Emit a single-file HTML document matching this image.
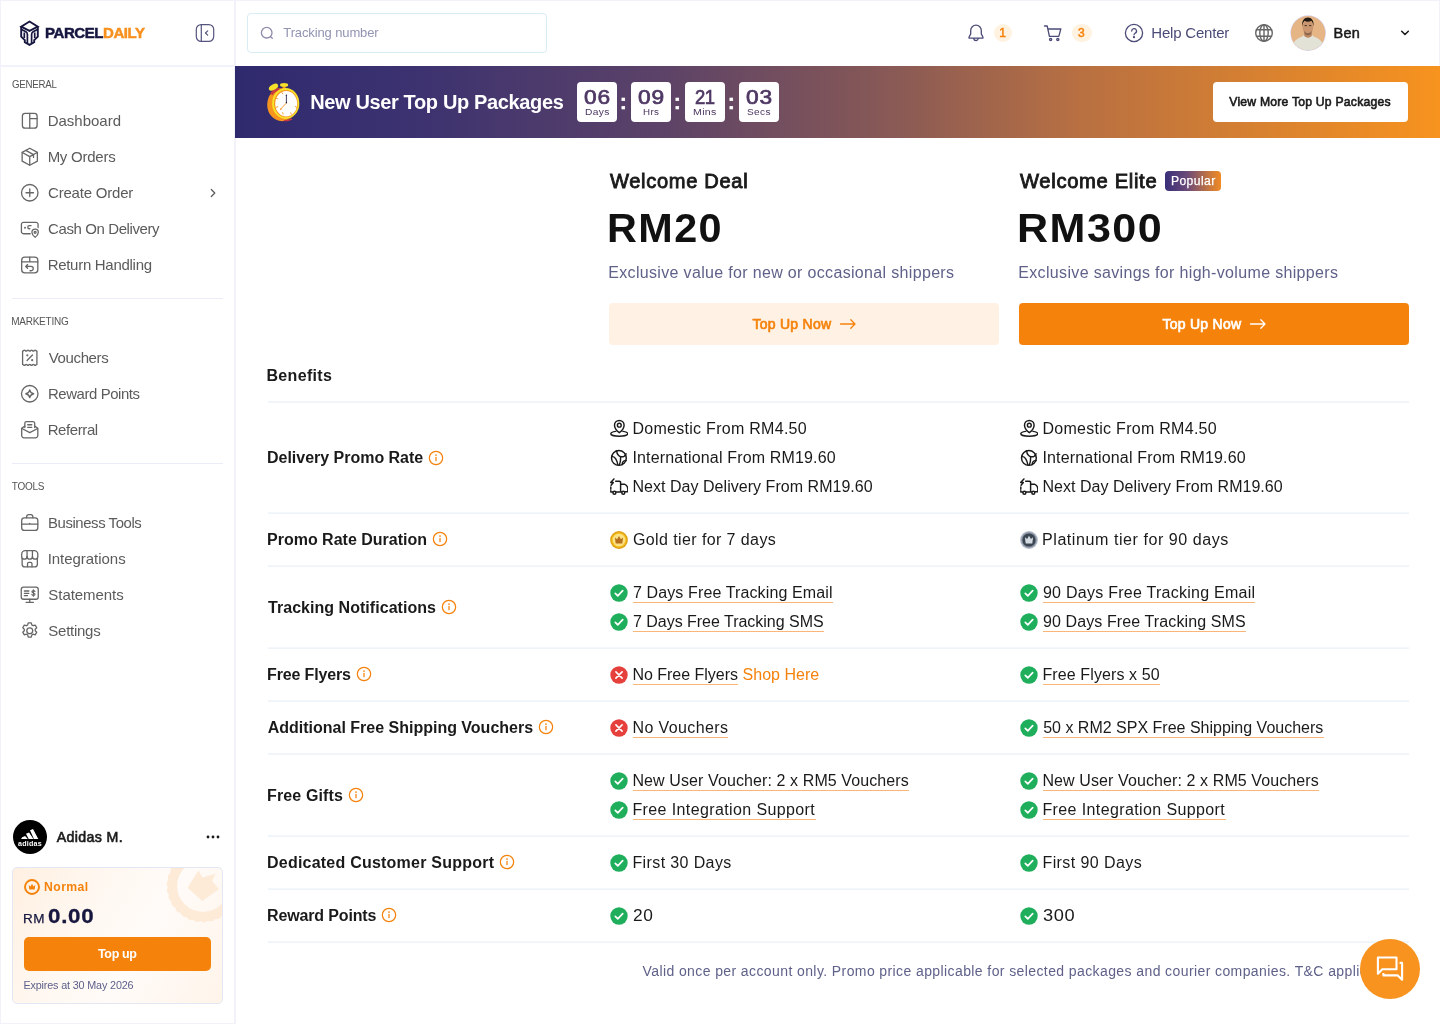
<!DOCTYPE html><html lang="en"><head><meta charset="utf-8"><title>ParcelDaily - New User Top Up Packages</title><style>
*{box-sizing:border-box;margin:0;padding:0}
html,body{width:1440px;height:1024px;overflow:hidden;background:#fff}
body{position:relative;font-family:"Liberation Sans",Arial,sans-serif;color:#1a1a1a;-webkit-font-smoothing:antialiased;will-change:transform}
.t{position:absolute;white-space:nowrap;display:block}
.abs{position:absolute}
.side{position:absolute;left:0;top:0;width:236px;height:1024px;background:#fff}
.top{position:absolute;left:236px;top:0;width:1204px;height:66px;background:#fff}
.logo-row{position:absolute;left:0;top:0;width:235px;height:66px}
.hr{position:absolute;height:1px;background:#eaecf7}
.bd{position:absolute;background:#f2f3fa}
.banner{position:absolute;left:235px;top:66px;width:1205px;height:72px;background:linear-gradient(90deg,#2f2a6e 0%,#3c3270 15%,#5b4268 35%,#8a5a55 55%,#b87042 70%,#dd842d 88%,#f7931e 100%)}
.cd{position:absolute;top:16px;width:40px;height:40px;background:#fff;border-radius:4px}
.btn{position:absolute;border-radius:4px}
.ul{border-bottom:1px solid #f9b77a}
svg{display:block;position:absolute}
</style></head><body>
<aside class="side">
<div class="logo-row">
<svg style="left:19px;top:19px" width="22" height="28" viewBox="0 0 22 28" fill="none" stroke="#16163f" stroke-width="1.900" stroke-linejoin="miter" stroke-linecap="butt"><path d="M10.500 2.500l8.300 5.200-8.300 4.200-8.300-4.200z"/><path d="M2.200 7.700v10l3.600 3.400v2.200l4.700 2.500 4.700-2.500v-2.200l3.600-3.400v-10"/><path d="M2.500 10.500l4.400 2.300c1 .6 1.500 1.500 1.500 2.600v8.900M18.500 10.500l-4.400 2.300c-1 .6-1.500 1.500-1.500 2.600v8.900M5.300 13.500v5.600M15.700 13.500v5.600" stroke-width="1.700"/></svg>
<span id="t1" class="t " style="left:45.36px;top:24.18px;font-size:15.5px;line-height:17px;font-weight:700;color:#16163f;letter-spacing:-0.434px;-webkit-text-stroke:0.5px #16163f;transform:scaleX(0.9684);transform-origin:0 50%;">PARCEL</span>
<span id="t2" class="t " style="left:103.06px;top:24.18px;font-size:15.5px;line-height:17px;font-weight:700;color:#f7901e;letter-spacing:-0.434px;-webkit-text-stroke:0.5px #f7901e;transform:scaleX(0.9667);transform-origin:0 50%;">DAILY</span>
<svg style="left:195px;top:23px" width="20" height="20" viewBox="0 0 20 20" fill="none" stroke="#55557f" stroke-width="1.2" stroke-linecap="round" stroke-linejoin="round"><rect x="1.300" y="1.600" width="17.400" height="16.800" rx="4.800"/><path d="M6.300 1.800v16.400M12.700 7.800L10.500 10l2.200 2.200"/></svg>
</div>
<span id="t3" class="t " style="left:11.51px;top:78.94px;font-size:10px;line-height:11px;font-weight:400;color:#555;letter-spacing:-0.280px;transform:scaleX(0.9713);transform-origin:0 50%;">GENERAL</span>
<div class="nav">
<svg width="21.5" height="21.5" viewBox="0 0 24 24" fill="none" stroke="#666" stroke-width="1.45" stroke-linecap="round" stroke-linejoin="round" style="left:19.25px;top:110.25px;color:#5b5b5b"><rect x="3.800" y="3.800" width="16.400" height="16.400" rx="3"/><path d="M12 3.800v16.400M12 9.600h8.200"/></svg>
<span id="t4" class="t " style="left:47.63px;top:112.16px;font-size:15px;line-height:17px;font-weight:400;color:#5b5b5b;letter-spacing:0.004px;">Dashboard</span>
</div>
<div class="nav">
<svg width="21.5" height="21.5" viewBox="0 0 24 24" fill="none" stroke="#666" stroke-width="1.45" stroke-linecap="round" stroke-linejoin="round" style="left:19.25px;top:146.25px;color:#5b5b5b"><path d="M12 2.5l8.5 4.6v9.8L12 21.5l-8.5-4.6V7.1z"/><path d="M3.7 7.2L12 11.8l8.3-4.6M12 11.8v9.5M7.6 4.9l8.6 4.7v3.2"/></svg>
<span id="t5" class="t " style="left:47.63px;top:148.16px;font-size:15px;line-height:17px;font-weight:400;color:#5b5b5b;letter-spacing:-0.246px;">My Orders</span>
</div>
<div class="nav">
<svg width="21.5" height="21.5" viewBox="0 0 24 24" fill="none" stroke="#666" stroke-width="1.45" stroke-linecap="round" stroke-linejoin="round" style="left:19.25px;top:182.25px;color:#5b5b5b"><circle cx="12" cy="12" r="9.2"/><path d="M12 7.8v8.4M7.8 12h8.4"/></svg>
<span id="t6" class="t " style="left:48.10px;top:184.16px;font-size:15px;line-height:17px;font-weight:400;color:#5b5b5b;letter-spacing:-0.214px;">Create Order</span>
<svg style="left:207px;top:187px" width="12" height="12" viewBox="0 0 12 12" fill="none" stroke="#5b5b5b" stroke-width="1.2" stroke-linecap="round" stroke-linejoin="round"><path d="M4.300 2.500L7.800 6 4.300 9.500"/></svg>
</div>
<div class="nav">
<svg width="21.5" height="21.5" viewBox="0 0 24 24" fill="none" stroke="#666" stroke-width="1.45" stroke-linecap="round" stroke-linejoin="round" style="left:19.25px;top:218.25px;color:#5b5b5b"><path d="M12.500 17.600H5a2.300 2.300 0 0 1-2.300-2.300V7.100A2.300 2.300 0 0 1 5 4.800h14a2.300 2.300 0 0 1 2.300 2.300v3.600"/><path d="M13.400 8.600h-1.900a1.700 1.700 0 0 0 0 3.400h.6"/><circle cx="6.700" cy="11" r=".400" fill="currentColor"/><path d="M18 21.6s3.6-2.7 3.6-5.6a3.6 3.6 0 0 0-7.2 0c0 2.900 3.600 5.600 3.600 5.600z" fill="#fff"/><circle cx="18" cy="16" r="1.1"/></svg>
<span id="t7" class="t " style="left:48.10px;top:220.16px;font-size:15px;line-height:17px;font-weight:400;color:#5b5b5b;letter-spacing:-0.402px;">Cash On Delivery</span>
</div>
<div class="nav">
<svg width="21.5" height="21.5" viewBox="0 0 24 24" fill="none" stroke="#666" stroke-width="1.45" stroke-linecap="round" stroke-linejoin="round" style="left:19.25px;top:254.25px;color:#5b5b5b"><rect x="3" y="3.600" width="18" height="17.4" rx="3.500"/><path d="M3 8.800h18M12 3.600v5.200"/><path d="M9.600 11.800L7.500 13.900l2.100 2.100M7.500 13.900h6a2.400 2.400 0 0 1 0 4.800h-1.200"/></svg>
<span id="t8" class="t " style="left:47.63px;top:256.16px;font-size:15px;line-height:17px;font-weight:400;color:#5b5b5b;letter-spacing:-0.285px;">Return Handling</span>
</div>
<div class="hr" style="left:12px;top:298px;width:211px"></div>
<span id="t9" class="t " style="left:11.20px;top:315.94px;font-size:10px;line-height:11px;font-weight:400;color:#555;letter-spacing:-0.240px;">MARKETING</span>
<div class="nav">
<svg width="21.5" height="21.5" viewBox="0 0 24 24" fill="none" stroke="#666" stroke-width="1.45" stroke-linecap="round" stroke-linejoin="round" style="left:19.25px;top:347.25px;color:#5b5b5b"><path d="M4 4.500c.8 0 1.200-.9 2-.9s1.200.9 2 .9 1.200-.9 2-.9 1.200.9 2 .9 1.200-.9 2-.9 1.200.9 2 .9 1.200-.9 2-.9 1.200.9 2 .9v15c-.8 0-1.200.9-2 .9s-1.200-.9-2-.9-1.200.9-2 .9-1.200-.9-2-.9-1.200.9-2 .9-1.200-.9-2-.9-1.200.9-2 .9-1.200-.9-2-.9z"/><path d="M9 15l6-6"/><circle cx="9.300" cy="9.300" r=".5"/><circle cx="14.700" cy="14.700" r=".5"/></svg>
<span id="t10" class="t " style="left:48.80px;top:349.16px;font-size:15px;line-height:17px;font-weight:400;color:#5b5b5b;letter-spacing:-0.382px;">Vouchers</span>
</div>
<div class="nav">
<svg width="21.5" height="21.5" viewBox="0 0 24 24" fill="none" stroke="#666" stroke-width="1.45" stroke-linecap="round" stroke-linejoin="round" style="left:19.25px;top:383.25px;color:#5b5b5b"><circle cx="12" cy="12" r="9.200"/><path d="M12 7.600c.5 2.600 1.800 3.900 4.400 4.400-2.600.5-3.900 1.800-4.400 4.400-.5-2.600-1.800-3.900-4.400-4.400 2.600-.5 3.900-1.800 4.400-4.400z"/></svg>
<span id="t11" class="t " style="left:47.63px;top:385.16px;font-size:15px;line-height:17px;font-weight:400;color:#5b5b5b;letter-spacing:-0.420px;transform:scaleX(0.9949);transform-origin:0 50%;">Reward Points</span>
</div>
<div class="nav">
<svg width="21.5" height="21.5" viewBox="0 0 24 24" fill="none" stroke="#666" stroke-width="1.45" stroke-linecap="round" stroke-linejoin="round" style="left:19.25px;top:419.25px;color:#5b5b5b"><path d="M6.500 9.500V4.800A1.800 1.800 0 0 1 8.300 3h7.400a1.800 1.800 0 0 1 1.800 1.800v4.700"/><path d="M6.500 8L3 10.300v8.200A2.500 2.500 0 0 0 5.500 21h13a2.500 2.500 0 0 0 2.500-2.500v-8.200L17.500 8"/><path d="M3.200 10.600L12 15.200l8.800-4.600M9.700 6.400h4.600M9.700 9.300h4.600"/></svg>
<span id="t12" class="t " style="left:47.63px;top:421.16px;font-size:15px;line-height:17px;font-weight:400;color:#5b5b5b;letter-spacing:-0.398px;">Referral</span>
</div>
<div class="hr" style="left:12px;top:463px;width:211px"></div>
<span id="t13" class="t " style="left:11.80px;top:480.94px;font-size:10px;line-height:11px;font-weight:400;color:#555;letter-spacing:-0.274px;">TOOLS</span>
<div class="nav">
<svg width="21.5" height="21.5" viewBox="0 0 24 24" fill="none" stroke="#666" stroke-width="1.45" stroke-linecap="round" stroke-linejoin="round" style="left:19.25px;top:512.25px;color:#5b5b5b"><rect x="3" y="6.500" width="18" height="14" rx="3"/><path d="M8.500 6.500V5.200A2.200 2.200 0 0 1 10.700 3h2.600a2.200 2.200 0 0 1 2.200 2.200v1.300M3 13.500h18M12 12.600v1"/></svg>
<span id="t14" class="t " style="left:47.64px;top:514.16px;font-size:15px;line-height:17px;font-weight:400;color:#5b5b5b;letter-spacing:-0.420px;transform:scaleX(0.9941);transform-origin:0 50%;">Business Tools</span>
</div>
<div class="nav">
<svg width="21.5" height="21.5" viewBox="0 0 24 24" fill="none" stroke="#666" stroke-width="1.45" stroke-linecap="round" stroke-linejoin="round" style="left:19.25px;top:548.25px;color:#5b5b5b"><path d="M3 9.500V7a4 4 0 0 1 4-4h10a4 4 0 0 1 4 4v2.500a3 3 0 0 1-6 0 3 3 0 0 1-6 0 3 3 0 0 1-6 0z"/><path d="M9 3v6.500M15 3v6.500M3.500 11.500V18a3 3 0 0 0 3 3h11a3 3 0 0 0 3-3v-6.500"/><path d="M9.500 21v-3.500a1.500 1.500 0 0 1 1.500-1.500h2a1.500 1.500 0 0 1 1.500 1.500V21"/></svg>
<span id="t15" class="t " style="left:47.63px;top:550.16px;font-size:15px;line-height:17px;font-weight:400;color:#5b5b5b;letter-spacing:-0.031px;">Integrations</span>
</div>
<div class="nav">
<svg width="21.5" height="21.5" viewBox="0 0 24 24" fill="none" stroke="#666" stroke-width="1.45" stroke-linecap="round" stroke-linejoin="round" style="left:19.25px;top:584.25px;color:#5b5b5b"><rect x="2.500" y="3.500" width="19" height="13.500" rx="2.500"/><path d="M12 17v3.500M8 20.600h8M6 7.800h5M6 10.400h5M6 13h3.500"/><path d="M17.800 8.300c-.3-.6-.9-.9-1.700-.9-1 0-1.700.5-1.700 1.300 0 1.900 3.500.8 3.500 2.700 0 .8-.7 1.300-1.800 1.300-.9 0-1.500-.4-1.800-1M16.100 6.400v7.300" stroke-width="1.300"/></svg>
<span id="t16" class="t " style="left:48.33px;top:586.16px;font-size:15px;line-height:17px;font-weight:400;color:#5b5b5b;letter-spacing:-0.059px;">Statements</span>
</div>
<div class="nav">
<svg width="21.5" height="21.5" viewBox="0 0 24 24" fill="none" stroke="#666" stroke-width="1.45" stroke-linecap="round" stroke-linejoin="round" style="left:19.25px;top:620.25px;color:#5b5b5b"><path d="M10.300 3.200h3.400l.6 2.300 1.500.9 2.300-.7 1.700 3-1.700 1.600v1.700l1.700 1.600-1.700 3-2.300-.7-1.500.9-.6 2.300h-3.400l-.6-2.300-1.500-.9-2.300.7-1.700-3 1.700-1.600v-1.700L4.200 8.700l1.700-3 2.300.7 1.500-.9z"/><circle cx="12" cy="12" r="3.300"/></svg>
<span id="t17" class="t " style="left:48.33px;top:622.16px;font-size:15px;line-height:17px;font-weight:400;color:#5b5b5b;letter-spacing:-0.266px;">Settings</span>
</div>
<svg style="left:13px;top:819.800px" width="34" height="34" viewBox="0 0 34 34" stroke="none"><circle cx="17" cy="17" r="17" fill="#000"/><path d="M17 10.300l3-1.400 5.300 10.100h-4.400zM13 13.800l3.100-1.400 4.300 6.600h-4.700zM9.200 17.300l2.900-1.400 2.700 3.100H8z" fill="#fff"/></svg>
<span id="t18" class="t " style="left:18.24px;top:839.74px;font-size:6.8px;line-height:7px;font-weight:700;color:#fff;letter-spacing:0.228px;transform:scaleX(1.0492);transform-origin:0 50%;">adidas</span>
<span id="t19" class="t " style="left:56.80px;top:828.93px;font-size:14.2px;line-height:16px;font-weight:400;color:#1a1a1a;letter-spacing:0.343px;-webkit-text-stroke:0.6px currentColor;">Adidas M.</span>
<svg style="left:205px;top:834px" width="16" height="6" viewBox="0 0 16 6" fill="#1a1a1a" stroke="none"><circle cx="3" cy="3" r="1.400"/><circle cx="8" cy="3" r="1.400"/><circle cx="13" cy="3" r="1.400"/></svg>
<div class="abs" style="left:12px;top:867px;width:211px;height:137px;border:1px solid #e3e6f3;border-radius:5px;background:linear-gradient(120deg,#fff0e1 0%,#fff8f1 35%,#fffbf8 60%,#fff4ea 100%);overflow:hidden">
<svg style="left:150px;top:-22px" width="80" height="80" viewBox="0 0 80 80" fill="none"><circle cx="40" cy="40" r="30.700" stroke="#fdead7" stroke-width="9.600"/><circle cx="40" cy="40" r="35" stroke="#fdead7" stroke-width="2.400" stroke-dasharray="4.500 2.830"/><path d="M24.600 41.700l10.900-17.100 3.900 7 13.200-3.900-3.500 7 6.600 8.500-16.300 11.700z" fill="#fdead7"/></svg>
</div>
<svg style="left:24px;top:879px" width="16" height="16" viewBox="0 0 16 16" fill="none" stroke="#f5820b" stroke-width="1.900"><circle cx="8" cy="8" r="7"/><path d="M4.700 6l1.800 1.400L8 4.800l1.500 2.600L11.300 6l-.6 4.600H5.300z" fill="#f5820b" stroke="none"/></svg>
<span id="t20" class="t " style="left:44.10px;top:880.20px;font-size:12.2px;line-height:14px;font-weight:700;color:#f5820b;letter-spacing:0.401px;">Normal</span>
<span id="t21" class="t " style="left:23.24px;top:910.67px;font-size:13px;line-height:15px;font-weight:400;color:#16163f;letter-spacing:0.437px;-webkit-text-stroke:0.25px #16163f;transform:scaleX(1.0393);transform-origin:0 50%;">RM</span>
<span id="t22" class="t " style="left:48.20px;top:904.68px;font-size:20.3px;line-height:22px;font-weight:700;color:#16163f;letter-spacing:0.682px;-webkit-text-stroke:0.3px #16163f;transform:scaleX(1.0998);transform-origin:0 50%;">0.00</span>
<div class="btn" style="left:24px;top:937px;width:187px;height:34px;background:#f5820b;border-radius:5px"></div>
<span id="t23" class="t " style="left:98.20px;top:946.47px;font-size:13px;line-height:15px;font-weight:700;color:#fff;letter-spacing:-0.364px;transform:scaleX(0.9624);transform-origin:0 50%;">Top up</span>
<span id="t24" class="t " style="left:23.45px;top:979.22px;font-size:10.8px;line-height:12px;font-weight:400;color:#5c5f8a;letter-spacing:-0.155px;">Expires at 30 May 2026</span>
<div class="bd" style="left:0;top:0;width:1px;height:1024px"></div>
<div class="bd" style="left:0;top:1023px;width:236px;height:1px"></div>
<div class="bd" style="left:234px;top:0;width:2px;height:1024px"></div>
<div class="bd" style="left:0;top:65px;width:235px;height:2px"></div>
</aside>
<header class="top">
<div class="abs" style="left:11px;top:13px;width:300px;height:40px;border:1px solid #d9edf5;border-radius:4px;background:#fff"></div>
<svg style="left:24px;top:26px" width="14" height="14" viewBox="0 0 14 14" fill="none" stroke="#8c8caa" stroke-width="1.300" stroke-linecap="round"><circle cx="6.700" cy="6.700" r="5.300"/><path d="M10.600 10.700l1.700 1.600"/></svg>
<span id="t25" class="t " style="left:47.30px;top:25.47px;font-size:13px;line-height:15px;font-weight:400;color:#9294b2;letter-spacing:-0.121px;">Tracking number</span>
<svg style="left:730px;top:23px" width="20" height="20" viewBox="0 0 20 20" fill="none" stroke="#4b4b78" stroke-width="1.300" stroke-linecap="round" stroke-linejoin="round"><path d="M10 2.200a5.300 5.300 0 0 0-5.300 5.300v3.400L3 14.200v.9h14v-.9l-1.700-3.300V7.500A5.300 5.300 0 0 0 10 2.200zM7.800 15.300a2.200 2.200 0 0 0 4.400 0"/></svg>
<div class="abs" style="left:758px;top:24px;width:18px;height:18px;border-radius:9px;background:#fff2e0"></div>
<span id="t26" class="t " style="left:763.20px;top:26.33px;font-size:12px;line-height:14px;font-weight:400;color:#f5820b;letter-spacing:0.000px;-webkit-text-stroke:0.5px currentColor;">1</span>
<svg style="left:807px;top:23px" width="20" height="20" viewBox="0 0 20 20" fill="none" stroke="#4b4b78" stroke-width="1.300" stroke-linecap="round" stroke-linejoin="round"><path d="M1.500 3h2.700l2.200 10.300h9.400L17.800 6H5"/><circle cx="7.600" cy="16.600" r="1.100"/><circle cx="14.800" cy="16.600" r="1.100"/></svg>
<div class="abs" style="left:836px;top:24px;width:20px;height:18px;border-radius:9px;background:#fff2e0"></div>
<span id="t27" class="t " style="left:842.00px;top:26.33px;font-size:12px;line-height:14px;font-weight:400;color:#f5820b;letter-spacing:0.000px;-webkit-text-stroke:0.5px currentColor;">3</span>
<svg style="left:888px;top:23px" width="20" height="20" viewBox="0 0 20 20" fill="none" stroke="#4b4b78" stroke-width="1.300" stroke-linecap="round" stroke-linejoin="round"><circle cx="10" cy="10" r="8.600"/><path d="M7.700 8a2.400 2.400 0 1 1 3.400 2.200c-.7.400-1.100.8-1.100 1.600"/><circle cx="10" cy="14.200" r=".500" fill="#4b4b78"/></svg>
<span id="t28" class="t " style="left:915.33px;top:24.36px;font-size:15px;line-height:17px;font-weight:400;color:#4b4b78;letter-spacing:-0.209px;">Help Center</span>
<svg style="left:1018px;top:23px" width="20" height="20" viewBox="0 0 20 20" fill="none" stroke="#666" stroke-width="1.400" stroke-linecap="round"><circle cx="10" cy="10" r="8.300"/><ellipse cx="10" cy="10" rx="4.200" ry="8.300"/><path d="M10 1.700v16.600M2.500 6.700h15M2.500 13.300h15"/></svg>
<svg style="left:1054px;top:15px" width="36" height="36" viewBox="0 0 36 36" stroke="none"><defs><clipPath id="av"><circle cx="18.100" cy="18.100" r="17.200"/></clipPath></defs><circle cx="18.100" cy="18.100" r="17.800" fill="#d7d4f0"/><g clip-path="url(#av)"><rect width="36" height="36" fill="#e6b586"/><path d="M2 36c0-8.500 3.500-12.300 10-14.300l1.800-1.700h8.400l1.800 1.700c6.500 2 10 5.800 10 14.300z" fill="#e3e2d6"/><path d="M14.200 17h7.600v3.600c-1.200 2.700-6.400 2.700-7.600 0z" fill="#b98660"/><ellipse cx="17.900" cy="12.400" rx="5.400" ry="6.900" fill="#c9966f"/><path d="M12.300 11.600c-.7-6 2-9 5.600-9s6.300 3 5.600 9c-.4-3-1.200-4.700-2.200-5.500-2.200.8-4.600.8-6.800 0-1 .8-1.800 2.500-2.200 5.500z" fill="#231a15"/><path d="M14.300 15.400c1 3.400 6.200 3.400 7.200 0 .2 3.700-1.400 4.600-3.600 4.600s-3.800-.9-3.600-4.600z" fill="#5a3f30" opacity=".5"/><path d="M14.600 10.600h2.300M19 10.600h2.300" stroke="#231a15" stroke-width=".800"/></g></svg>
<span id="t29" class="t " style="left:1097.57px;top:25.19px;font-size:14.5px;line-height:16px;font-weight:400;color:#1a1a1a;letter-spacing:0.224px;-webkit-text-stroke:0.5px currentColor;">Ben</span>
<svg style="left:1163px;top:28px" width="12" height="10" viewBox="0 0 12 10" fill="none" stroke="#1a1a1a" stroke-width="1.600" stroke-linecap="round" stroke-linejoin="round"><path d="M2.700 3.300L6 6.500l3.300-3.200"/></svg>
</header>
<div class="bd" style="left:0;top:0;width:1440px;height:1px"></div>
<div class="bd" style="left:1439px;top:0;width:1px;height:66px"></div>
<section class="banner">
<svg style="left:30px;top:15px" width="36" height="42" viewBox="0 0 36 42" stroke="none"><rect x="17.600" y="4.500" width="3" height="4" fill="#f7941d"/><path d="M9 10l3.500-2 2 3-3.500 2z" fill="#f7941d"/><ellipse cx="16.900" cy="23.700" rx="14.700" ry="16.500" fill="#f7941d"/><path d="M5 12.500c2-3 5-5 8.500-5.800l1 2.300c-3 1-5.500 2.800-7 5.300zM19 40.200c3 .3 6-.4 8.500-2l-1.500-1c-2 1.200-4.500 1.800-7 1.700z" fill="#c93a40"/><ellipse cx="8.500" cy="6.200" rx="5.100" ry="2.700" transform="rotate(-30 8.500 6.200)" fill="#f5e129"/><ellipse cx="19.100" cy="3.900" rx="4.100" ry="1.900" fill="#f5e129"/><ellipse cx="20.700" cy="22.400" rx="13.600" ry="15.500" fill="#f7e22a"/><ellipse cx="20.900" cy="22.600" rx="11.900" ry="13.700" fill="#f7941d"/><ellipse cx="21.200" cy="22.800" rx="11" ry="12.800" fill="#fff"/><path d="M11.500 17.300l1.300.5M11.400 26.300l1.400-.5M17.700 31.600l.4 1.500M25.600 31.800l.8 1.400M30.500 25.600l1.200.7M17 11.600l.7 1.200" stroke="#f7941d" stroke-width=".900" stroke-linecap="round"/><path d="M21.400 21.900v-7.600" stroke="#16163f" stroke-width=".800"/><path d="M21.400 13.300l.9 1.500h-1.800zM21.400 20.800l.8 1-.8 1-.8-1z" fill="#16163f"/><path d="M21.200 22.200l-5 5.400" stroke="#f7941d" stroke-width=".900"/><path d="M14.900 29l.7-2.300 1.600 1.500z" fill="#f7941d"/></svg>
<span id="t30" class="t " style="left:75.15px;top:25.08px;font-size:20px;line-height:22px;font-weight:700;color:#fff;letter-spacing:-0.360px;">New User Top Up Packages</span>
<div class="cd" style="left:342px"></div>
<span id="t31" class="t " style="left:348.99px;top:19.25px;font-size:20.5px;line-height:23px;font-weight:400;color:#4f3864;letter-spacing:0.689px;-webkit-text-stroke:0.7px currentColor;transform:scaleX(1.1081);transform-origin:0 50%;">06</span>
<span id="t32" class="t " style="left:349.60px;top:40.00px;font-size:9.6px;line-height:11px;font-weight:400;color:#4a3560;letter-spacing:0.323px;transform:scaleX(1.0647);transform-origin:0 50%;">Days</span>
<div class="cd" style="left:396px"></div>
<span id="t33" class="t " style="left:402.99px;top:19.25px;font-size:20.5px;line-height:23px;font-weight:400;color:#4f3864;letter-spacing:0.689px;-webkit-text-stroke:0.7px currentColor;transform:scaleX(1.1081);transform-origin:0 50%;">09</span>
<span id="t34" class="t " style="left:407.74px;top:40.00px;font-size:9.6px;line-height:11px;font-weight:400;color:#4a3560;letter-spacing:0.323px;transform:scaleX(1.0189);transform-origin:0 50%;">Hrs</span>
<div class="cd" style="left:450px"></div>
<span id="t35" class="t " style="left:459.83px;top:19.25px;font-size:20.5px;line-height:23px;font-weight:400;color:#4f3864;letter-spacing:-0.574px;-webkit-text-stroke:0.7px currentColor;transform:scaleX(0.9003);transform-origin:0 50%;">21</span>
<span id="t36" class="t " style="left:457.78px;top:40.00px;font-size:9.6px;line-height:11px;font-weight:400;color:#4a3560;letter-spacing:0.323px;transform:scaleX(1.0997);transform-origin:0 50%;">Mins</span>
<div class="cd" style="left:504px"></div>
<span id="t37" class="t " style="left:510.99px;top:19.25px;font-size:20.5px;line-height:23px;font-weight:400;color:#4f3864;letter-spacing:0.689px;-webkit-text-stroke:0.7px currentColor;transform:scaleX(1.1081);transform-origin:0 50%;">03</span>
<span id="t38" class="t " style="left:512.18px;top:40.00px;font-size:9.6px;line-height:11px;font-weight:400;color:#4a3560;letter-spacing:0.323px;transform:scaleX(1.0504);transform-origin:0 50%;">Secs</span>
<span id="t39" class="t " style="left:385.10px;top:25.48px;font-size:20px;line-height:22px;font-weight:700;color:#fff;letter-spacing:0.000px;-webkit-text-stroke:0.6px #fff;">:</span>
<span id="t40" class="t " style="left:439.10px;top:25.48px;font-size:20px;line-height:22px;font-weight:700;color:#fff;letter-spacing:0.000px;-webkit-text-stroke:0.6px #fff;">:</span>
<span id="t41" class="t " style="left:493.10px;top:25.48px;font-size:20px;line-height:22px;font-weight:700;color:#fff;letter-spacing:0.000px;-webkit-text-stroke:0.6px #fff;">:</span>
<div class="btn" style="left:978px;top:16px;width:195px;height:40px;background:#fff"></div>
<span id="t42" class="t " style="left:994.25px;top:28.80px;font-size:12.2px;line-height:14px;font-weight:400;color:#1a1a1a;letter-spacing:0.218px;-webkit-text-stroke:0.6px currentColor;">View More Top Up Packages</span>
</section>
<main>
<span id="t43" class="t " style="left:609.70px;top:170.28px;font-size:20px;line-height:22px;font-weight:400;color:#1a1a1a;letter-spacing:0.672px;-webkit-text-stroke:0.85px currentColor;transform:scaleX(1.0040);transform-origin:0 50%;">Welcome Deal</span>
<span id="t44" class="t " style="left:607.11px;top:206.06px;font-size:40px;line-height:44px;font-weight:700;color:#111;letter-spacing:1.344px;transform:scaleX(1.0346);transform-origin:0 50%;">RM20</span>
<span id="t45" class="t " style="left:608.25px;top:264.00px;font-size:16px;line-height:17px;font-weight:400;color:#5f6189;letter-spacing:0.332px;">Exclusive value for new or occasional shippers</span>
<div class="btn" style="left:609px;top:303px;width:390px;height:42px;background:#fff1e3"></div>
<span id="t46" class="t " style="left:752.58px;top:315.82px;font-size:14px;line-height:16px;font-weight:400;color:#f5820b;letter-spacing:0.244px;-webkit-text-stroke:0.65px currentColor;">Top Up Now</span>
<svg style="left:839px;top:318px" width="18" height="12" viewBox="0 0 18 12" fill="none" stroke="#f5820b" stroke-width="1.300" stroke-linecap="round" stroke-linejoin="round"><path d="M1.500 6h14.500M11.800 1.800L16 6l-4.200 4.200"/></svg>
<span id="t47" class="t " style="left:1019.70px;top:170.28px;font-size:20px;line-height:22px;font-weight:400;color:#1a1a1a;letter-spacing:0.672px;-webkit-text-stroke:0.85px currentColor;transform:scaleX(1.0081);transform-origin:0 50%;">Welcome Elite</span>
<div class="abs" style="left:1165px;top:171px;width:56px;height:20px;border-radius:4px;background:linear-gradient(90deg,#3a2f7a 0%,#6b4a78 40%,#c9783e 80%,#f08a24 100%)"></div>
<span id="t48" class="t " style="left:1170.54px;top:174.33px;font-size:12px;line-height:14px;font-weight:400;color:#fff;letter-spacing:0.403px;-webkit-text-stroke:0.25px #fff;transform:scaleX(1.0086);transform-origin:0 50%;">Popular</span>
<span id="t49" class="t " style="left:1017.01px;top:206.06px;font-size:40px;line-height:44px;font-weight:700;color:#111;letter-spacing:1.344px;transform:scaleX(1.0776);transform-origin:0 50%;">RM300</span>
<span id="t50" class="t " style="left:1018.25px;top:264.00px;font-size:16px;line-height:17px;font-weight:400;color:#5f6189;letter-spacing:0.337px;">Exclusive savings for high-volume shippers</span>
<div class="btn" style="left:1019px;top:303px;width:390px;height:42px;background:#f5820b"></div>
<span id="t51" class="t " style="left:1162.58px;top:315.82px;font-size:14px;line-height:16px;font-weight:400;color:#fff;letter-spacing:0.244px;-webkit-text-stroke:0.65px currentColor;">Top Up Now</span>
<svg style="left:1249px;top:318px" width="18" height="12" viewBox="0 0 18 12" fill="none" stroke="#fff" stroke-width="1.300" stroke-linecap="round" stroke-linejoin="round"><path d="M1.500 6h14.500M11.800 1.800L16 6l-4.200 4.200"/></svg>
<span id="t52" class="t " style="left:266.50px;top:366.90px;font-size:16px;line-height:17px;font-weight:700;color:#1a1a1a;letter-spacing:0.318px;">Benefits</span>
<div class="hr" style="left:268px;top:401px;width:1141px;height:2px;background:linear-gradient(#f3f7fb 50%,#eff4f9 50%)"></div>
<div class="hr" style="left:268px;top:512px;width:1141px;height:2px;background:linear-gradient(#f3f7fb 50%,#eff4f9 50%)"></div>
<div class="hr" style="left:268px;top:565px;width:1141px;height:2px;background:linear-gradient(#f3f7fb 50%,#eff4f9 50%)"></div>
<div class="hr" style="left:268px;top:647px;width:1141px;height:2px;background:linear-gradient(#f3f7fb 50%,#eff4f9 50%)"></div>
<div class="hr" style="left:268px;top:700px;width:1141px;height:2px;background:linear-gradient(#f3f7fb 50%,#eff4f9 50%)"></div>
<div class="hr" style="left:268px;top:753px;width:1141px;height:2px;background:linear-gradient(#f3f7fb 50%,#eff4f9 50%)"></div>
<div class="hr" style="left:268px;top:835px;width:1141px;height:2px;background:linear-gradient(#f3f7fb 50%,#eff4f9 50%)"></div>
<div class="hr" style="left:268px;top:888px;width:1141px;height:2px;background:linear-gradient(#f3f7fb 50%,#eff4f9 50%)"></div>
<div class="hr" style="left:268px;top:941px;width:1141px;height:2px;background:linear-gradient(#f3f7fb 50%,#eff4f9 50%)"></div>
<span id="t53" class="t " style="left:267.00px;top:449.30px;font-size:16px;line-height:17px;font-weight:700;color:#1a1a1a;letter-spacing:-0.017px;">Delivery Promo Rate</span>
<svg style="left:428.3px;top:449.5px" width="16" height="16" viewBox="0 0 16 16" fill="none" stroke="#f5820b" stroke-width="1.250" stroke-linecap="round"><circle cx="8" cy="8" r="6.650"/><path d="M8 7.400v3.300"/><circle cx="8" cy="5.100" r=".300" fill="#f5820b"/></svg>
<svg style="left:610px;top:419.5px;margin-top:-0.300px" width="18" height="18" viewBox="0 0 18 18" fill="none" stroke="#1a1a1a" stroke-width="1.450" stroke-linecap="round" stroke-linejoin="round"><path d="M9.300 13.700S4.500 10.200 4.500 6.200a4.800 4.800 0 0 1 9.600 0c0 4-4.800 7.500-4.800 7.500z"/><circle cx="9.300" cy="6.200" r="1.900"/><path d="M5.600 12.400C2.600 12.900.800 13.700.800 14.700c0 1.400 3.800 2.500 8.500 2.500s8.500-1.100 8.500-2.500c0-1-1.800-1.800-4.800-2.300"/></svg>
<span id="t54" class="t " style="left:632.45px;top:420.00px;font-size:16px;line-height:17px;font-weight:400;color:#1a1a1a;letter-spacing:0.280px;">Domestic From RM4.50</span>
<svg style="left:610px;top:448.5px" width="18" height="18" viewBox="0 0 18 18" fill="none" stroke="#1a1a1a" stroke-width="1.450" stroke-linecap="round" stroke-linejoin="round"><circle cx="8.900" cy="8.950" r="7.400"/><path d="M6.700 1.900c.1 1.700.5 3 1.300 3.900.8.900 1.700 1.700 2.700 1.900 1.200.2 2.400.1 3.300-.4.900-.600 1.600-1.500 2-2.600M10.700 7.700c-.2 1.200-.1 2.300-.2 3.500-.1 1.600-.6 3.100-1.100 4.500M1.700 7.400c1.600.2 3 .9 3.900 2.200 1.100 1.700 1.800 3.900 2.200 6.100M12.200 15.500c0-1 .2-1.900.7-2.600.8-1 2-1.300 3.300-1.400"/></svg>
<span id="t55" class="t " style="left:632.45px;top:449.00px;font-size:16px;line-height:17px;font-weight:400;color:#1a1a1a;letter-spacing:0.162px;">International From RM19.60</span>
<svg style="left:610px;top:477.5px" width="18" height="18" viewBox="0 0 18 18" fill="none" stroke="#1a1a1a" stroke-width="1.450" stroke-linecap="round" stroke-linejoin="round"><path d="M3.900.900L.700 4.500h2.600L1.100 7.300"/><path d="M.800 9v2.200M.800 12.800V14h2M5.700 3.200h3.700a1.200 1.200 0 0 1 1.200 1.200v9.300M6.100 13.900h5.600M10.600 6.200h3.800c2 .8 3.400 2.900 3.400 5v2.600h-2.900"/><circle cx="4.400" cy="14.700" r="1.500"/><circle cx="13.300" cy="14.700" r="1.500"/></svg>
<span id="t56" class="t " style="left:632.45px;top:478.00px;font-size:16px;line-height:17px;font-weight:400;color:#1a1a1a;letter-spacing:0.037px;">Next Day Delivery From RM19.60</span>
<svg style="left:1020px;top:419.5px;margin-top:-0.300px" width="18" height="18" viewBox="0 0 18 18" fill="none" stroke="#1a1a1a" stroke-width="1.450" stroke-linecap="round" stroke-linejoin="round"><path d="M9.300 13.700S4.500 10.200 4.500 6.200a4.800 4.800 0 0 1 9.600 0c0 4-4.800 7.500-4.800 7.500z"/><circle cx="9.300" cy="6.200" r="1.900"/><path d="M5.600 12.400C2.600 12.900.800 13.700.800 14.700c0 1.400 3.800 2.500 8.500 2.500s8.500-1.100 8.500-2.500c0-1-1.800-1.800-4.800-2.300"/></svg>
<span id="t57" class="t " style="left:1042.45px;top:420.00px;font-size:16px;line-height:17px;font-weight:400;color:#1a1a1a;letter-spacing:0.280px;">Domestic From RM4.50</span>
<svg style="left:1020px;top:448.5px" width="18" height="18" viewBox="0 0 18 18" fill="none" stroke="#1a1a1a" stroke-width="1.450" stroke-linecap="round" stroke-linejoin="round"><circle cx="8.900" cy="8.950" r="7.400"/><path d="M6.700 1.900c.1 1.700.5 3 1.300 3.900.8.900 1.700 1.700 2.700 1.900 1.200.2 2.400.1 3.300-.4.900-.600 1.600-1.500 2-2.600M10.700 7.700c-.2 1.200-.1 2.300-.2 3.500-.1 1.600-.6 3.100-1.100 4.500M1.700 7.400c1.600.2 3 .9 3.900 2.200 1.100 1.700 1.800 3.900 2.200 6.100M12.200 15.500c0-1 .2-1.900.7-2.600.8-1 2-1.300 3.300-1.400"/></svg>
<span id="t58" class="t " style="left:1042.45px;top:449.00px;font-size:16px;line-height:17px;font-weight:400;color:#1a1a1a;letter-spacing:0.162px;">International From RM19.60</span>
<svg style="left:1020px;top:477.5px" width="18" height="18" viewBox="0 0 18 18" fill="none" stroke="#1a1a1a" stroke-width="1.450" stroke-linecap="round" stroke-linejoin="round"><path d="M3.900.900L.700 4.500h2.600L1.100 7.300"/><path d="M.800 9v2.200M.800 12.800V14h2M5.700 3.200h3.700a1.200 1.200 0 0 1 1.200 1.200v9.300M6.100 13.900h5.600M10.600 6.200h3.800c2 .8 3.400 2.900 3.400 5v2.600h-2.900"/><circle cx="4.400" cy="14.700" r="1.500"/><circle cx="13.300" cy="14.700" r="1.500"/></svg>
<span id="t59" class="t " style="left:1042.45px;top:478.00px;font-size:16px;line-height:17px;font-weight:400;color:#1a1a1a;letter-spacing:0.037px;">Next Day Delivery From RM19.60</span>
<span id="t60" class="t " style="left:267.00px;top:531.20px;font-size:16px;line-height:17px;font-weight:700;color:#1a1a1a;letter-spacing:-0.002px;">Promo Rate Duration</span>
<svg style="left:431.7px;top:531.4000000000001px" width="16" height="16" viewBox="0 0 16 16" fill="none" stroke="#f5820b" stroke-width="1.250" stroke-linecap="round"><circle cx="8" cy="8" r="6.650"/><path d="M8 7.400v3.300"/><circle cx="8" cy="5.100" r=".300" fill="#f5820b"/></svg>
<svg style="left:610px;top:530.5px" width="18" height="18" viewBox="0 0 18 18" stroke="none"><circle cx="9" cy="9" r="8.900" fill="#dfa114"/><circle cx="9" cy="9" r="7.600" fill="#f3bd1c"/><circle cx="9" cy="9" r="6.300" fill="#fbe384"/><path d="M4.900 6.500l2.200 1.700L9 4.900l1.900 3.300 2.200-1.700-.8 6H5.700z" fill="#b8701a"/></svg>
<span id="t61" class="t " style="left:632.95px;top:531.00px;font-size:16px;line-height:17px;font-weight:400;color:#1a1a1a;letter-spacing:0.404px;">Gold tier for 7 days</span>
<svg style="left:1020px;top:530.5px" width="18" height="18" viewBox="0 0 18 18" stroke="none"><circle cx="9" cy="9" r="8.900" fill="#b4bcc8"/><circle cx="9" cy="9" r="7.700" fill="#8791a0"/><circle cx="9" cy="9" r="6.600" fill="#3c4653"/><path d="M4.900 6.300l2.200 1.800L9 4.700l1.900 3.400 2.200-1.800-.8 6.200H5.700z" fill="#d5dbe2"/></svg>
<span id="t62" class="t " style="left:1042.44px;top:531.00px;font-size:16px;line-height:17px;font-weight:400;color:#1a1a1a;letter-spacing:0.538px;transform:scaleX(1.0050);transform-origin:0 50%;">Platinum tier for 90 days</span>
<span id="t63" class="t " style="left:268.00px;top:598.70px;font-size:16px;line-height:17px;font-weight:700;color:#1a1a1a;letter-spacing:0.038px;">Tracking Notifications</span>
<svg style="left:440.8px;top:598.9000000000001px" width="16" height="16" viewBox="0 0 16 16" fill="none" stroke="#f5820b" stroke-width="1.250" stroke-linecap="round"><circle cx="8" cy="8" r="6.650"/><path d="M8 7.400v3.300"/><circle cx="8" cy="5.100" r=".300" fill="#f5820b"/></svg>
<svg style="left:610px;top:583.5px" width="18" height="18" viewBox="0 0 18 18" stroke="none"><circle cx="9" cy="9" r="8.700" fill="#1fae5b"/><path d="M5.300 9.300l2.500 2.500 4.900-5.200" fill="none" stroke="#fff" stroke-width="1.700" stroke-linecap="round" stroke-linejoin="round"/></svg>
<span id="t64" class="t " style="left:632.95px;top:584.00px;font-size:16px;line-height:17px;font-weight:400;color:#1a1a1a;letter-spacing:0.124px;">7 Days Free Tracking Email</span>
<div class="abs" style="left:633px;top:601.5px;width:199.49999999999994px;height:1px;background:#f9b678"></div>
<svg style="left:610px;top:612.5px" width="18" height="18" viewBox="0 0 18 18" stroke="none"><circle cx="9" cy="9" r="8.700" fill="#1fae5b"/><path d="M5.300 9.300l2.500 2.500 4.900-5.200" fill="none" stroke="#fff" stroke-width="1.700" stroke-linecap="round" stroke-linejoin="round"/></svg>
<span id="t65" class="t " style="left:632.95px;top:613.00px;font-size:16px;line-height:17px;font-weight:400;color:#1a1a1a;letter-spacing:-0.019px;">7 Days Free Tracking SMS</span>
<div class="abs" style="left:633px;top:630.5px;width:190.99999999999994px;height:1px;background:#f9b678"></div>
<svg style="left:1020px;top:583.5px" width="18" height="18" viewBox="0 0 18 18" stroke="none"><circle cx="9" cy="9" r="8.700" fill="#1fae5b"/><path d="M5.300 9.300l2.500 2.500 4.900-5.200" fill="none" stroke="#fff" stroke-width="1.700" stroke-linecap="round" stroke-linejoin="round"/></svg>
<span id="t66" class="t " style="left:1042.95px;top:584.00px;font-size:16px;line-height:17px;font-weight:400;color:#1a1a1a;letter-spacing:0.258px;">90 Days Free Tracking Email</span>
<div class="abs" style="left:1043px;top:601.5px;width:211.99999999999994px;height:1px;background:#f9b678"></div>
<svg style="left:1020px;top:612.5px" width="18" height="18" viewBox="0 0 18 18" stroke="none"><circle cx="9" cy="9" r="8.700" fill="#1fae5b"/><path d="M5.300 9.300l2.500 2.500 4.900-5.200" fill="none" stroke="#fff" stroke-width="1.700" stroke-linecap="round" stroke-linejoin="round"/></svg>
<span id="t67" class="t " style="left:1042.95px;top:613.00px;font-size:16px;line-height:17px;font-weight:400;color:#1a1a1a;letter-spacing:0.111px;">90 Days Free Tracking SMS</span>
<div class="abs" style="left:1043px;top:630.5px;width:202.99999999999994px;height:1px;background:#f9b678"></div>
<span id="t68" class="t " style="left:267.00px;top:666.20px;font-size:16px;line-height:17px;font-weight:700;color:#1a1a1a;letter-spacing:-0.143px;">Free Flyers</span>
<svg style="left:355.8px;top:666.4000000000001px" width="16" height="16" viewBox="0 0 16 16" fill="none" stroke="#f5820b" stroke-width="1.250" stroke-linecap="round"><circle cx="8" cy="8" r="6.650"/><path d="M8 7.400v3.300"/><circle cx="8" cy="5.100" r=".300" fill="#f5820b"/></svg>
<svg style="left:610px;top:665.5px" width="18" height="18" viewBox="0 0 18 18" stroke="none"><circle cx="9" cy="9" r="8.700" fill="#e5403c"/><path d="M5.900 5.900l6.200 6.200M12.100 5.900l-6.200 6.200" fill="none" stroke="#fff" stroke-width="1.600" stroke-linecap="round"/></svg>
<span id="t69" class="t " style="left:632.45px;top:666.00px;font-size:16px;line-height:17px;font-weight:400;color:#1a1a1a;letter-spacing:-0.019px;">No Free Flyers</span>
<div class="abs" style="left:633px;top:683.5px;width:105.2px;height:1px;background:#f9b678"></div>
<span id="t70" class="t " style="left:742.50px;top:666.00px;font-size:16px;line-height:17px;font-weight:400;color:#f5820b;letter-spacing:0.032px;">Shop Here</span>
<svg style="left:1020px;top:665.5px" width="18" height="18" viewBox="0 0 18 18" stroke="none"><circle cx="9" cy="9" r="8.700" fill="#1fae5b"/><path d="M5.300 9.300l2.500 2.500 4.900-5.200" fill="none" stroke="#fff" stroke-width="1.700" stroke-linecap="round" stroke-linejoin="round"/></svg>
<span id="t71" class="t " style="left:1042.45px;top:666.00px;font-size:16px;line-height:17px;font-weight:400;color:#1a1a1a;letter-spacing:0.111px;">Free Flyers x 50</span>
<div class="abs" style="left:1043px;top:683.5px;width:116.99999999999996px;height:1px;background:#f9b678"></div>
<span id="t72" class="t " style="left:267.75px;top:719.20px;font-size:16px;line-height:17px;font-weight:700;color:#1a1a1a;letter-spacing:-0.006px;">Additional Free Shipping Vouchers</span>
<svg style="left:537.9px;top:719.4000000000001px" width="16" height="16" viewBox="0 0 16 16" fill="none" stroke="#f5820b" stroke-width="1.250" stroke-linecap="round"><circle cx="8" cy="8" r="6.650"/><path d="M8 7.400v3.300"/><circle cx="8" cy="5.100" r=".300" fill="#f5820b"/></svg>
<svg style="left:610px;top:718.5px" width="18" height="18" viewBox="0 0 18 18" stroke="none"><circle cx="9" cy="9" r="8.700" fill="#e5403c"/><path d="M5.900 5.900l6.200 6.200M12.100 5.900l-6.200 6.200" fill="none" stroke="#fff" stroke-width="1.600" stroke-linecap="round"/></svg>
<span id="t73" class="t " style="left:632.45px;top:719.00px;font-size:16px;line-height:17px;font-weight:400;color:#1a1a1a;letter-spacing:0.394px;">No Vouchers</span>
<div class="abs" style="left:633px;top:736.5px;width:95.2px;height:1px;background:#f9b678"></div>
<svg style="left:1020px;top:718.5px" width="18" height="18" viewBox="0 0 18 18" stroke="none"><circle cx="9" cy="9" r="8.700" fill="#1fae5b"/><path d="M5.300 9.300l2.500 2.500 4.900-5.200" fill="none" stroke="#fff" stroke-width="1.700" stroke-linecap="round" stroke-linejoin="round"/></svg>
<span id="t74" class="t " style="left:1043.20px;top:719.00px;font-size:16px;line-height:17px;font-weight:400;color:#1a1a1a;letter-spacing:-0.001px;">50 x RM2 SPX Free Shipping Vouchers</span>
<div class="abs" style="left:1043px;top:736.5px;width:280.49999999999994px;height:1px;background:#f9b678"></div>
<span id="t75" class="t " style="left:267.00px;top:786.70px;font-size:16px;line-height:17px;font-weight:700;color:#1a1a1a;letter-spacing:0.140px;">Free Gifts</span>
<svg style="left:347.8px;top:786.9000000000001px" width="16" height="16" viewBox="0 0 16 16" fill="none" stroke="#f5820b" stroke-width="1.250" stroke-linecap="round"><circle cx="8" cy="8" r="6.650"/><path d="M8 7.400v3.300"/><circle cx="8" cy="5.100" r=".300" fill="#f5820b"/></svg>
<svg style="left:610px;top:771.5px" width="18" height="18" viewBox="0 0 18 18" stroke="none"><circle cx="9" cy="9" r="8.700" fill="#1fae5b"/><path d="M5.300 9.300l2.500 2.500 4.900-5.200" fill="none" stroke="#fff" stroke-width="1.700" stroke-linecap="round" stroke-linejoin="round"/></svg>
<span id="t76" class="t " style="left:632.45px;top:772.00px;font-size:16px;line-height:17px;font-weight:400;color:#1a1a1a;letter-spacing:0.101px;">New User Voucher: 2 x RM5 Vouchers</span>
<div class="abs" style="left:633px;top:789.5px;width:275.99999999999994px;height:1px;background:#f9b678"></div>
<svg style="left:610px;top:800.5px" width="18" height="18" viewBox="0 0 18 18" stroke="none"><circle cx="9" cy="9" r="8.700" fill="#1fae5b"/><path d="M5.300 9.300l2.500 2.500 4.900-5.200" fill="none" stroke="#fff" stroke-width="1.700" stroke-linecap="round" stroke-linejoin="round"/></svg>
<span id="t77" class="t " style="left:632.45px;top:801.00px;font-size:16px;line-height:17px;font-weight:400;color:#1a1a1a;letter-spacing:0.385px;">Free Integration Support</span>
<div class="abs" style="left:633px;top:818.5px;width:182.49999999999994px;height:1px;background:#f9b678"></div>
<svg style="left:1020px;top:771.5px" width="18" height="18" viewBox="0 0 18 18" stroke="none"><circle cx="9" cy="9" r="8.700" fill="#1fae5b"/><path d="M5.300 9.300l2.500 2.500 4.900-5.200" fill="none" stroke="#fff" stroke-width="1.700" stroke-linecap="round" stroke-linejoin="round"/></svg>
<span id="t78" class="t " style="left:1042.45px;top:772.00px;font-size:16px;line-height:17px;font-weight:400;color:#1a1a1a;letter-spacing:0.101px;">New User Voucher: 2 x RM5 Vouchers</span>
<div class="abs" style="left:1043px;top:789.5px;width:275.99999999999994px;height:1px;background:#f9b678"></div>
<svg style="left:1020px;top:800.5px" width="18" height="18" viewBox="0 0 18 18" stroke="none"><circle cx="9" cy="9" r="8.700" fill="#1fae5b"/><path d="M5.300 9.300l2.500 2.500 4.900-5.200" fill="none" stroke="#fff" stroke-width="1.700" stroke-linecap="round" stroke-linejoin="round"/></svg>
<span id="t79" class="t " style="left:1042.45px;top:801.00px;font-size:16px;line-height:17px;font-weight:400;color:#1a1a1a;letter-spacing:0.385px;">Free Integration Support</span>
<div class="abs" style="left:1043px;top:818.5px;width:182.49999999999994px;height:1px;background:#f9b678"></div>
<span id="t80" class="t " style="left:267.00px;top:854.20px;font-size:16px;line-height:17px;font-weight:700;color:#1a1a1a;letter-spacing:0.225px;">Dedicated Customer Support</span>
<svg style="left:499.4px;top:854.4000000000001px" width="16" height="16" viewBox="0 0 16 16" fill="none" stroke="#f5820b" stroke-width="1.250" stroke-linecap="round"><circle cx="8" cy="8" r="6.650"/><path d="M8 7.400v3.300"/><circle cx="8" cy="5.100" r=".300" fill="#f5820b"/></svg>
<svg style="left:610px;top:853.5px" width="18" height="18" viewBox="0 0 18 18" stroke="none"><circle cx="9" cy="9" r="8.700" fill="#1fae5b"/><path d="M5.300 9.300l2.500 2.500 4.900-5.200" fill="none" stroke="#fff" stroke-width="1.700" stroke-linecap="round" stroke-linejoin="round"/></svg>
<span id="t81" class="t " style="left:632.45px;top:854.00px;font-size:16px;line-height:17px;font-weight:400;color:#1a1a1a;letter-spacing:0.384px;">First 30 Days</span>
<svg style="left:1020px;top:853.5px" width="18" height="18" viewBox="0 0 18 18" stroke="none"><circle cx="9" cy="9" r="8.700" fill="#1fae5b"/><path d="M5.300 9.300l2.500 2.500 4.900-5.200" fill="none" stroke="#fff" stroke-width="1.700" stroke-linecap="round" stroke-linejoin="round"/></svg>
<span id="t82" class="t " style="left:1042.45px;top:854.00px;font-size:16px;line-height:17px;font-weight:400;color:#1a1a1a;letter-spacing:0.426px;">First 90 Days</span>
<span id="t83" class="t " style="left:267.00px;top:907.20px;font-size:16px;line-height:17px;font-weight:700;color:#1a1a1a;letter-spacing:-0.140px;">Reward Points</span>
<svg style="left:381.3px;top:907.4000000000001px" width="16" height="16" viewBox="0 0 16 16" fill="none" stroke="#f5820b" stroke-width="1.250" stroke-linecap="round"><circle cx="8" cy="8" r="6.650"/><path d="M8 7.400v3.300"/><circle cx="8" cy="5.100" r=".300" fill="#f5820b"/></svg>
<svg style="left:610px;top:906.5px" width="18" height="18" viewBox="0 0 18 18" stroke="none"><circle cx="9" cy="9" r="8.700" fill="#1fae5b"/><path d="M5.300 9.300l2.500 2.500 4.900-5.200" fill="none" stroke="#fff" stroke-width="1.700" stroke-linecap="round" stroke-linejoin="round"/></svg>
<span id="t84" class="t " style="left:632.89px;top:907.00px;font-size:16px;line-height:17px;font-weight:400;color:#1a1a1a;letter-spacing:0.538px;transform:scaleX(1.0823);transform-origin:0 50%;">20</span>
<svg style="left:1020px;top:906.5px" width="18" height="18" viewBox="0 0 18 18" stroke="none"><circle cx="9" cy="9" r="8.700" fill="#1fae5b"/><path d="M5.300 9.300l2.500 2.500 4.900-5.200" fill="none" stroke="#fff" stroke-width="1.700" stroke-linecap="round" stroke-linejoin="round"/></svg>
<span id="t85" class="t " style="left:1043.13px;top:907.00px;font-size:16px;line-height:17px;font-weight:400;color:#1a1a1a;letter-spacing:0.538px;transform:scaleX(1.1387);transform-origin:0 50%;">300</span>
<span id="t86" class="t " style="left:642.50px;top:963.12px;font-size:14px;line-height:16px;font-weight:400;color:#5f6189;letter-spacing:0.401px;">Valid once per account only. Promo price applicable for selected packages and courier companies. T&amp;C applies.</span>
</main>
<div class="abs" style="left:1360px;top:939px;width:60px;height:60px;border-radius:50%;background:#f7931e"></div>
<svg style="left:1375px;top:954px" width="30" height="30" viewBox="0 0 30 30" fill="none" stroke="#fff" stroke-width="2.100" stroke-linejoin="round" stroke-linecap="butt"><path d="M2.900 3.500h18.600v11.800H7.300l-4.400 4.400z"/><path d="M24.600 8.900h2.500v16.800l-4.300-4.300H8.400v-2.300"/></svg>
</body></html>
